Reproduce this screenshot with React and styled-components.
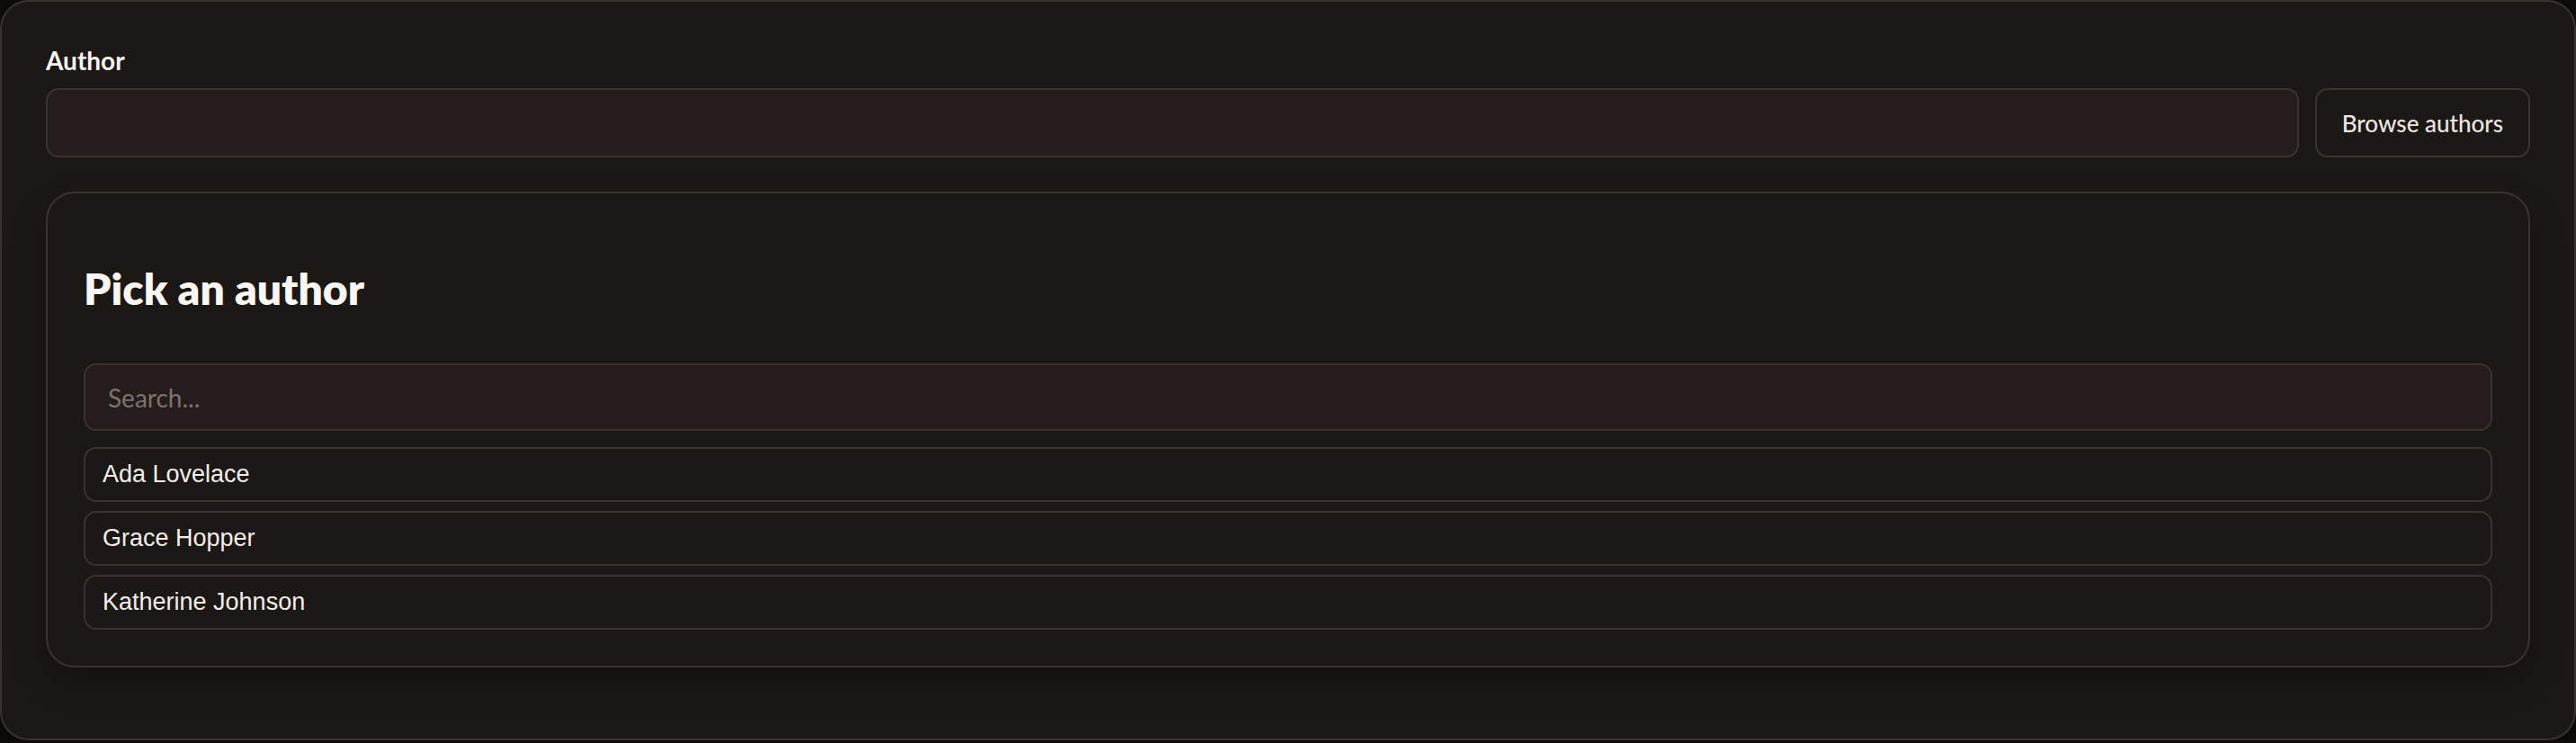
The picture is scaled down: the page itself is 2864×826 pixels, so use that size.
import React from "react";
import styled, { createGlobalStyle } from "styled-components";

const GlobalStyle = createGlobalStyle`
  html, body {
    margin: 0;
    padding: 0;
    background: #0f0c0a;
  }
  * { box-sizing: border-box; }
  body {
    font-family: Lato, "Noto Sans", sans-serif;
    color: #f7f2ee;
  }
`;

const Card = styled.section`
  height: 823px;
  border: 2px solid #3a322f;
  border-radius: 32px;
  background: #1c1815;
  padding: 45px 49px 80px 49px;
  box-shadow: 0 8px 30px rgba(0, 0, 0, 0.35);
`;

const Label = styled.label`
  display: block;
  font-size: 28px;
  line-height: 40px;
  font-weight: 700;
  color: #f8f4f0;
`;

const FieldRow = styled.div`
  display: flex;
  gap: 18px;
  margin-top: 11px;
  height: 77px;
`;

const TextInput = styled.input`
  flex: 1;
  min-width: 0;
  height: 100%;
  border: 2px solid #3b3330;
  border-radius: 14px;
  background: #251d1b;
  color: #f7f2ee;
  font-family: Lato, sans-serif;
  font-size: 28px;
  padding: 0 24px;
  outline: none;
`;

const OutlineButton = styled.button`
  height: 100%;
  padding: 0 28px;
  border: 2px solid #3b3330;
  border-radius: 14px;
  background: transparent;
  color: #ece6e1;
  font-family: Lato, sans-serif;
  font-size: 26px;
  font-weight: 500;
  cursor: pointer;
`;

const Panel = styled.div`
  margin-top: 38px;
  border: 2px solid #3b3330;
  border-radius: 32px;
  background: #1c1815;
  padding: 40px;
  box-shadow: 0 18px 40px rgba(0, 0, 0, 0.28);
`;

const Heading = styled.h2`
  margin: 37px 0 0 0;
  font-size: 48px;
  line-height: 58px;
  font-weight: 800;
  color: #faf6f2;
`;

const SearchInput = styled.input`
  display: block;
  width: 100%;
  height: 75px;
  margin-top: 54px;
  border: 2px solid #3b3330;
  border-radius: 14px;
  background: #251d1b;
  color: #f7f2ee;
  font-family: Lato, sans-serif;
  font-size: 28px;
  padding: 0 25px;
  outline: none;
  &::placeholder {
    color: #7b7471;
  }
`;

const List = styled.div`
  display: flex;
  flex-direction: column;
  gap: 10px;
  margin-top: 18px;
`;

const Item = styled.button`
  display: flex;
  align-items: center;
  width: 100%;
  height: 61px;
  padding: 0 19px;
  border: 2px solid #3b3330;
  border-radius: 14px;
  background: #1c1815;
  color: #f3eeea;
  font-family: "Liberation Sans", Arial, sans-serif;
  font-size: 27px;
  text-align: left;
  cursor: pointer;
`;

const authors = ["Ada Lovelace", "Grace Hopper", "Katherine Johnson"];

export default function App() {
  return (
    <>
      <GlobalStyle />
      <Card>
        <Label htmlFor="author">Author</Label>
        <FieldRow>
          <TextInput id="author" />
          <OutlineButton>Browse authors</OutlineButton>
        </FieldRow>
        <Panel>
          <Heading>Pick an author</Heading>
          <SearchInput placeholder="Search..." />
          <List>
            {authors.map((a) => (
              <Item key={a}>{a}</Item>
            ))}
          </List>
        </Panel>
      </Card>
    </>
  );
}
